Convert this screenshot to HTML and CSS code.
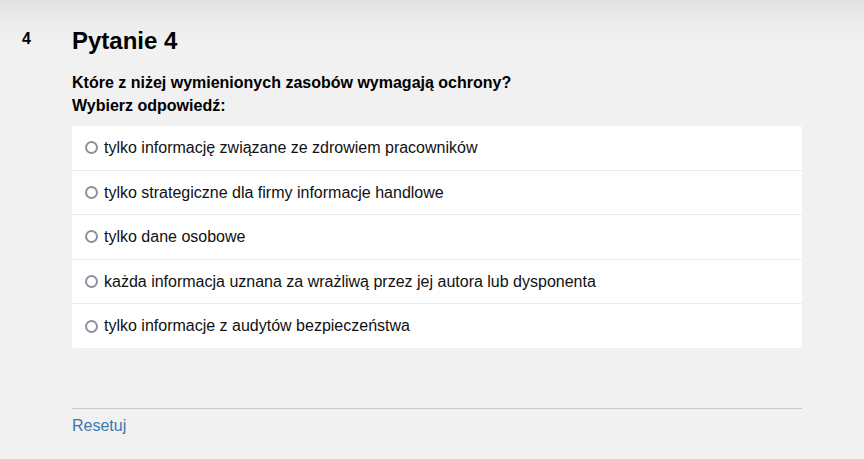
FILE: index.html
```html
<!DOCTYPE html>
<html lang="pl">
<head>
<meta charset="utf-8">
<title>Pytanie 4</title>
<link rel="stylesheet" href="styles.css">
</head>
<body>
<div class="page">
  <div class="qnum">4</div>
  <div class="main">
    <h2 class="title">Pytanie 4</h2>
    <div class="prompt">
      <div>Które z niżej wymienionych zasobów wymagają ochrony?</div>
      <div>Wybierz odpowiedź:</div>
    </div>
    <div class="card">
      <label class="opt"><span class="radio"></span><span>tylko informację związane ze zdrowiem pracowników</span></label>
      <label class="opt"><span class="radio"></span><span>tylko strategiczne dla firmy informacje handlowe</span></label>
      <label class="opt"><span class="radio"></span><span>tylko dane osobowe</span></label>
      <label class="opt"><span class="radio"></span><span>każda informacja uznana za wrażliwą przez jej autora lub dysponenta</span></label>
      <label class="opt"><span class="radio"></span><span>tylko informacje z audytów bezpieczeństwa</span></label>
    </div>
    <div class="footer">
      <a class="reset" href="#">Resetuj</a>
    </div>
  </div>
</div>
</body>
</html>
```
FILE: styles.css
```css
html, body {
  margin: 0;
  padding: 0;
}
body {
  width: 864px;
  height: 459px;
  overflow: hidden;
  background: linear-gradient(to bottom, #e1e1e1 0px, #ececec 20px, #f1f1f1 45px, #f1f1f1 100%);
  font-family: "Liberation Sans", Arial, sans-serif;
  color: #000;
}
.page {
  display: flex;
  align-items: flex-start;
  padding-top: 27px;
}
.qnum {
  width: 50px;
  padding-left: 22px;
  margin-top: 3px;
  font-size: 16px;
  line-height: 18px;
  font-weight: bold;
}
.main {
  width: 730px;
}
.title {
  margin: 0;
  font-size: 24px;
  line-height: 28px;
  font-weight: bold;
}
.prompt {
  margin-top: 17px;
  font-size: 16px;
  line-height: 22.5px;
  font-weight: bold;
}
.card {
  margin-top: 9px;
  background: #fff;
  border-radius: 3px;
  display: flex;
  flex-direction: column;
}
.opt {
  display: flex;
  align-items: center;
  padding: 12px 13px;
  line-height: 19.6px;
  font-size: 16px;
  color: #111;
}
.opt + .opt {
  border-top: 1px solid #ececec;
}
.radio {
  width: 13px;
  height: 13px;
  box-sizing: border-box;
  border: 2px solid #8f8f9d;
  border-radius: 50%;
  background: #fff;
  margin-right: 6px;
  flex: none;
}
.footer {
  margin-top: 60px;
  border-top: 1px solid #c8c8c8;
  padding-top: 8px;
}
.reset {
  font-size: 16px;
  line-height: 18px;
  color: #3a78ae;
  text-decoration: none;
}
```
